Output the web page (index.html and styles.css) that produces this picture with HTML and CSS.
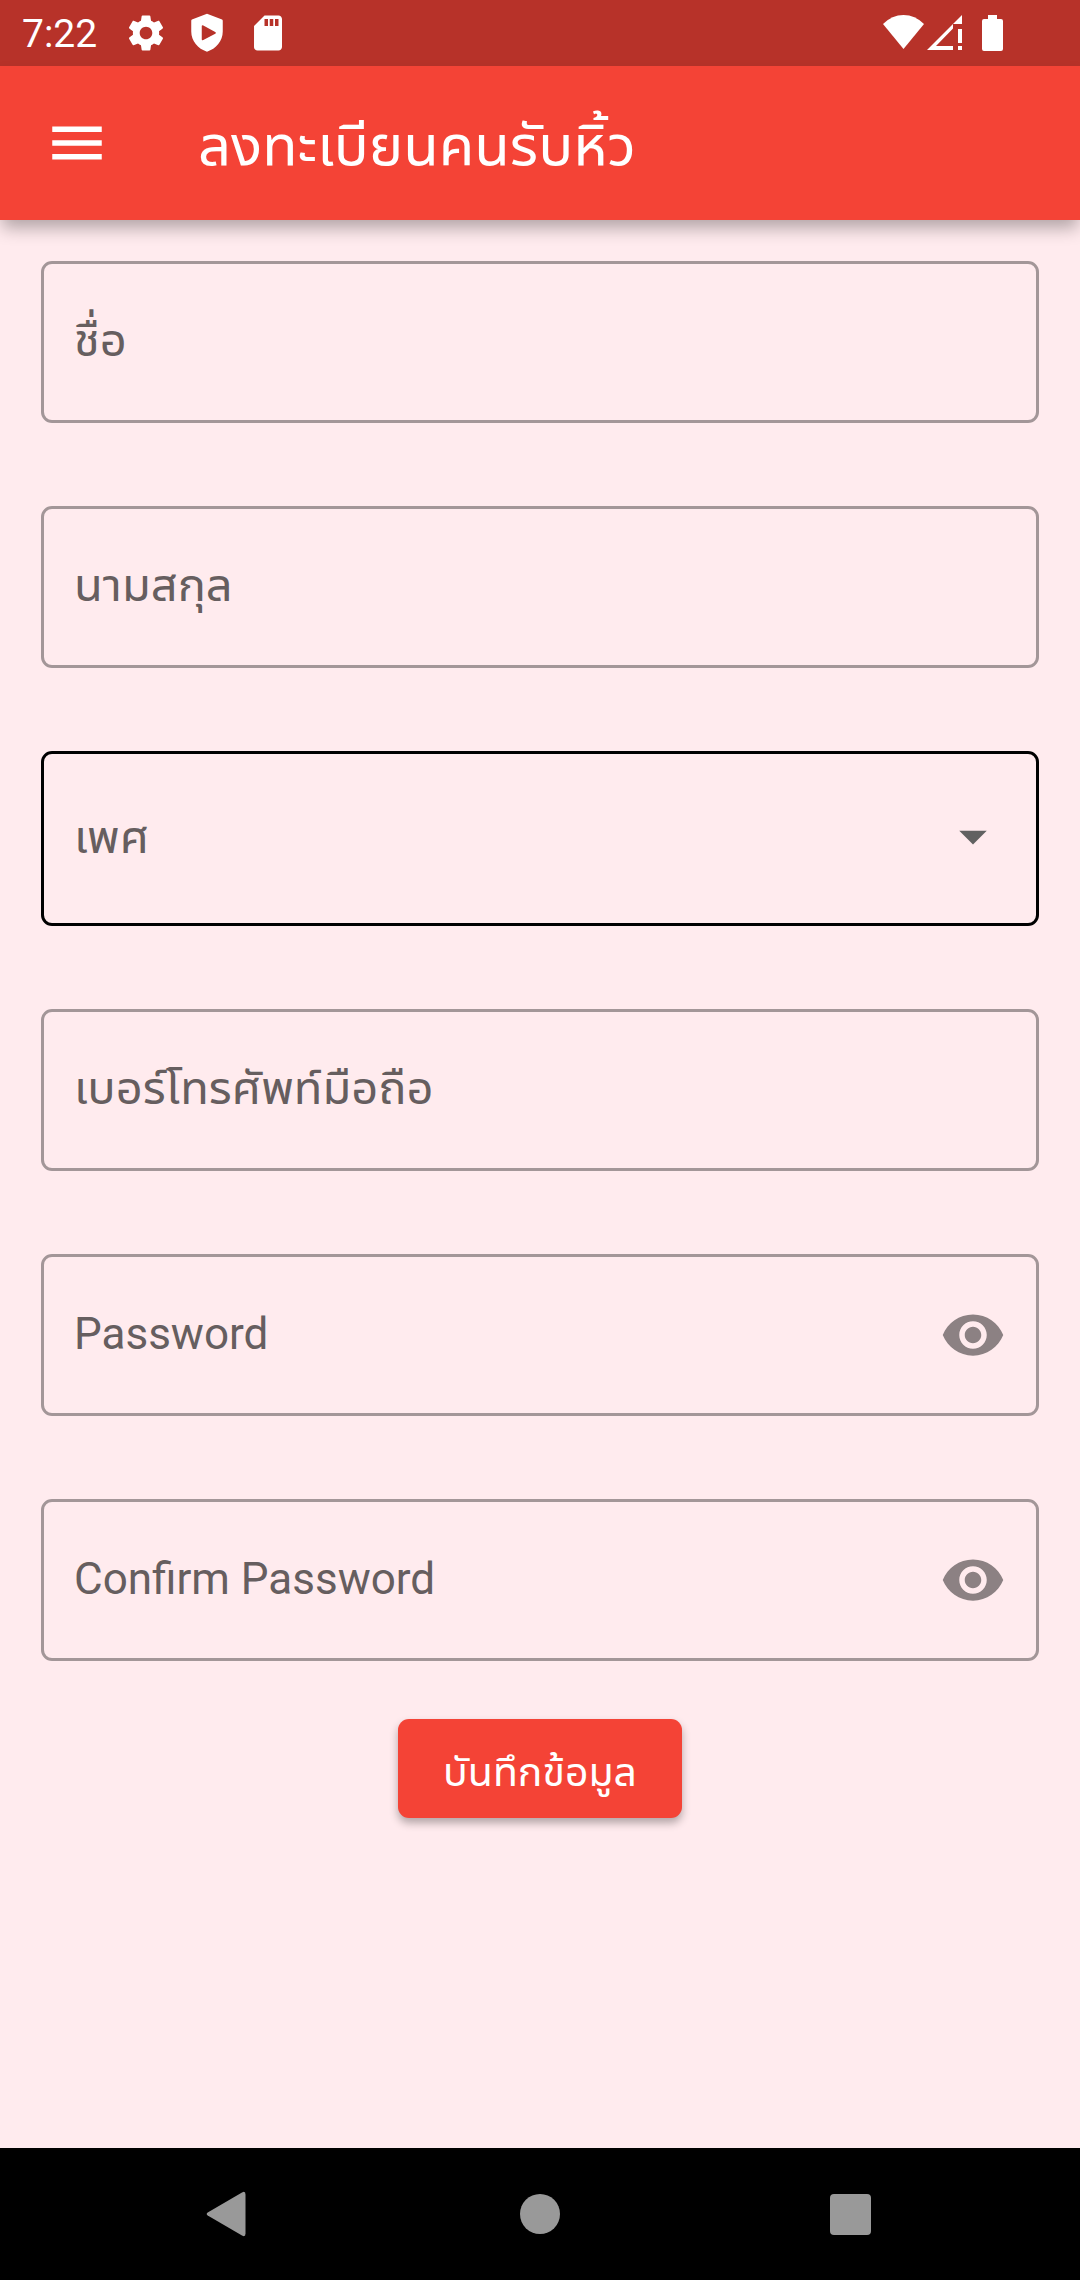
FILE: index.html
```html
<!DOCTYPE html>
<html lang="th">
<head>
<meta charset="utf-8">
<meta name="viewport" content="width=device-width, initial-scale=1">
<title>ลงทะเบียนคนรับหิ้ว</title>
<link rel="stylesheet" href="styles.css">
</head>
<body class="screen">
<div class="status-bar">
  <time class="clock">7:22</time>
  <div class="notices">
    <svg class="notice" viewBox="0 0 24 24" aria-hidden="true"><path d="M19.43 12.98c.04-.32.07-.64.07-.98s-.03-.66-.07-.98l2.11-1.65c.19-.15.24-.42.12-.64l-2-3.46c-.12-.22-.39-.3-.61-.22l-2.49 1c-.52-.4-1.08-.73-1.69-.98l-.38-2.65C14.46 2.18 14.25 2 14 2h-4c-.25 0-.46.18-.49.42l-.38 2.65c-.61.25-1.17.59-1.69.98l-2.49-1c-.23-.09-.49 0-.61.22l-2 3.46c-.13.22-.07.49.12.64l2.11 1.65c-.04.32-.07.65-.07.98s.03.66.07.98l-2.11 1.65c-.19.15-.24.42-.12.64l2 3.46c.12.22.39.3.61.22l2.49-1c.52.4 1.08.73 1.69.98l.38 2.65c.03.24.24.42.49.42h4c.25 0 .46-.18.49-.42l.38-2.65c.61-.25 1.17-.59 1.69-.98l2.49 1c.23.09.49 0 .61-.22l2-3.46c.12-.22.07-.49-.12-.64l-2.11-1.65zM12 15.6c-1.990 0-3.600-1.610-3.600-3.600s1.610-3.600 3.600-3.600 3.600 1.610 3.600 3.600-1.610 3.600-3.600 3.600z"/></svg>
    <svg class="notice" viewBox="0 0 24 24" aria-hidden="true"><path fill-rule="evenodd" d="M12 1 3.400 4.300Q3 4.500 3 5v6.200c0 5.500 3.800 9.900 9 11.500 5.200-1.600 9-6 9-11.500V5q0-.5-.4-.7zM9 8.200q0-1 .9-.5l6.800 3.700q.9.500 0 1l-6.800 3.600q-.9.500-.9-.5z"/></svg>
    <svg class="notice" viewBox="0 0 24 24" aria-hidden="true"><path d="M18 2h-8L4.020 8 4 20c0 1.100.9 2 2 2h12c1.100 0 2-.9 2-2V4c0-1.100-.9-2-2-2zm-6 6h-2V4h2v4zm3 0h-2V4h2v4zm3 0h-2V4h2v4z"/></svg>
  </div>
  <div class="signals">
    <svg class="wifi" viewBox="0 0 41 34" aria-hidden="true"><path d="M0 9Q9 0 20.500 0T41 9L20.500 34z"/></svg>
    <svg class="cell" viewBox="0 0 35 35" aria-hidden="true"><path d="M35 0v9h-9v4.500L9 31H26v4H0zM31 14h4v14h-4zM31 31h4v4h-4z"/></svg>
    <svg class="battery" viewBox="0 0 21 36" aria-hidden="true"><path d="M6 0h9v4h4q2 0 2 2v28q0 2-2 2H2q-2 0-2-2V6q0-2 2-2h4z"/></svg>
  </div>
</div>
<header class="app-bar">
  <button class="icon-button" type="button" aria-label="เมนู"><svg class="icon" viewBox="0 0 24 24" aria-hidden="true"><path d="M3 18h18v-2H3v2zm0-5h18v-2H3v2zm0-7v2h18V6H3z"/></svg></button>
  <h1 class="title">ลงทะเบียนคนรับหิ้ว</h1>
</header>
<main class="content">
  <form class="form">
    <div class="field">
      <label class="label" for="first-name">ชื่อ</label>
      <input class="control" id="first-name" type="text">
    </div>
    <div class="field">
      <label class="label" for="last-name">นามสกุล</label>
      <input class="control" id="last-name" type="text">
    </div>
    <div class="field field-select">
      <label class="label" for="gender">เพศ</label>
      <select class="control" id="gender"><option value="" selected></option></select>
      <svg class="icon arrow" viewBox="0 0 24 24" aria-hidden="true"><path d="M7 9l5 5 5-5z"/></svg>
    </div>
    <div class="field">
      <label class="label" for="phone">เบอร์โทรศัพท์มือถือ</label>
      <input class="control" id="phone" type="tel">
    </div>
    <div class="field">
      <label class="label label-latin" for="password">Password</label>
      <input class="control" id="password" type="password">
      <button class="icon-button eye" type="button" aria-label="แสดงรหัสผ่าน"><svg class="icon" viewBox="0 0 24 24" aria-hidden="true"><path d="M12 4.500C7 4.500 2.730 7.610 1 12c1.730 4.390 6 7.500 11 7.500s9.270-3.110 11-7.500c-1.730-4.390-6-7.500-11-7.500zM12 17c-2.760 0-5-2.240-5-5s2.240-5 5-5 5 2.240 5 5-2.240 5-5 5zm0-8c-1.660 0-3 1.340-3 3s1.340 3 3 3 3-1.340 3-3-1.340-3-3-3z"/></svg></button>
    </div>
    <div class="field">
      <label class="label label-latin" for="confirm">Confirm Password</label>
      <input class="control" id="confirm" type="password">
      <button class="icon-button eye" type="button" aria-label="แสดงรหัสผ่าน"><svg class="icon" viewBox="0 0 24 24" aria-hidden="true"><path d="M12 4.500C7 4.500 2.730 7.610 1 12c1.730 4.390 6 7.500 11 7.500s9.270-3.110 11-7.500c-1.730-4.390-6-7.500-11-7.500zM12 17c-2.760 0-5-2.240-5-5s2.240-5 5-5 5 2.240 5 5-2.240 5-5 5zm0-8c-1.660 0-3 1.340-3 3s1.340 3 3 3 3-1.340 3-3-1.340-3-3-3z"/></svg></button>
    </div>
    <button class="submit" type="submit">บันทึกข้อมูล</button>
  </form>
</main>
<nav class="nav-bar" aria-label="ระบบ">
  <button class="nav-button" type="button" aria-label="ย้อนกลับ"><svg class="nav-icon" viewBox="0 0 48 48" aria-hidden="true"><path d="M2.700 22.500 37 2.500q3.500-2 3.500 2v39q0 4-3.500 2L2.700 25.500q-2-1.500 0-3z"/></svg></button>
  <button class="nav-button" type="button" aria-label="หน้าหลัก"><svg class="nav-icon" viewBox="0 0 48 48" aria-hidden="true"><circle cx="24" cy="24" r="20"/></svg></button>
  <button class="nav-button" type="button" aria-label="ล่าสุด"><svg class="nav-icon" viewBox="0 0 48 48" aria-hidden="true"><rect x="3" y="4" width="41" height="41" rx="4"/></svg></button>
</nav>
</body>
</html>
```
FILE: styles.css
```css
* {
  box-sizing: border-box;
}

.screen {
  margin: 0;
  min-height: 100vh;
  display: flex;
  flex-direction: column;
  background: #ffebee;
  color: #fff;
  font-family: Roboto, "Noto Sans Thai UI", "Noto Sans Thai", "Noto Sans", sans-serif;
}

.status-bar {
  display: flex;
  align-items: center;
  height: 66px;
  padding: 0 77px 0 22px;
  background: #b73229;
}

.clock {
  width: 103px;
  padding-top: 2px;
  font-size: 39px;
  line-height: 48px;
}

.notices {
  flex: 1;
  display: flex;
  gap: 19px;
}

.notice {
  width: 42px;
  height: 42px;
  fill: #fff;
}

.signals {
  display: flex;
  align-items: flex-start;
  fill: #fff;
}

.wifi {
  width: 41px;
  height: 34px;
  margin-right: 3px;
}

.cell {
  width: 35px;
  height: 35px;
  margin-right: 20px;
}

.battery {
  width: 21px;
  height: 36px;
}

.app-bar {
  display: flex;
  align-items: center;
  gap: 88px;
  height: 154px;
  padding: 0 44px;
  background: #f44336;
  box-shadow: 0 10px 16px -2px rgba(0, 0, 0, 0.3);
}

.title {
  margin: 0;
  padding-top: 4px;
  font-size: 58px;
  font-weight: 400;
  line-height: 64px;
}

.icon-button {
  display: flex;
  padding: 0;
  border: 0;
  background: none;
  color: inherit;
}

.icon {
  width: 66px;
  height: 66px;
  fill: currentColor;
}

.content {
  flex: 1;
  padding: 41px;
}

.form {
  display: flex;
  flex-direction: column;
  gap: 83px;
}

.field {
  display: grid;
  grid-template-columns: 1fr auto;
  align-items: center;
  height: 162px;
  padding: 0 30px;
  border: 3px solid #a39698;
  border-radius: 11px;
}

.field-select {
  height: 175px;
  border-color: #000;
}

.label {
  grid-area: 1 / 1;
  padding-bottom: 4px;
  color: #665e5f;
  font-size: 47px;
  line-height: 52px;
}

.label-latin {
  padding-bottom: 2px;
  font-size: 44px;
}

.control {
  grid-area: 1 / 1 / 2 / 3;
  width: 100%;
  height: 100%;
  padding: 0;
  border: 0;
  outline: 0;
  appearance: none;
  background: none;
  color: #212121;
  font: inherit;
  font-size: 44px;
}

.arrow {
  grid-area: 1 / 2;
  color: #616161;
  pointer-events: none;
}

.eye {
  grid-area: 1 / 2;
  color: #8c8183;
}

.submit {
  align-self: center;
  height: 99px;
  margin-top: -25px;
  padding: 6px 45px 0;
  border: 0;
  border-radius: 11px;
  background: #f44336;
  box-shadow: 0 5px 8px rgba(0, 0, 0, 0.3);
  color: #fff;
  font: inherit;
  font-size: 41px;
  line-height: 48px;
}

.nav-bar {
  display: grid;
  grid-template-columns: repeat(3, 1fr);
  height: 132px;
  padding: 0 73px;
  background: #000;
}

.nav-button {
  display: flex;
  align-items: center;
  justify-content: center;
  padding: 0;
  border: 0;
  background: none;
}

.nav-icon {
  width: 48px;
  height: 48px;
  fill: #999;
}
```
